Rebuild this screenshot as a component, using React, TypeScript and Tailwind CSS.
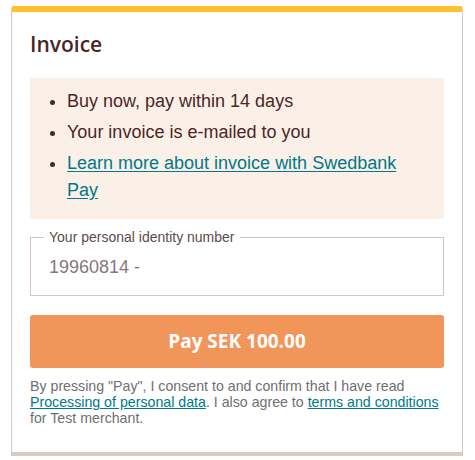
import React from "react";

function App() {
  const body = { fontFamily: '"Liberation Sans", Arial, sans-serif' };
  const head = { fontFamily: '"Open Sans", "Liberation Sans", sans-serif' };

  return (
    <div className="w-[475px] h-[460px] bg-white pt-[6px] px-[11px]" style={body}>
      <div className="w-[452px] border border-[#d6cbc4] border-t-[6px] border-t-[#fcc12b] rounded-t-[3px] shadow-[0_3px_0_#dccbc1] px-[18px] pt-[18px] pb-[26px]">
        <h2 className="text-[21px] leading-[28px] font-semibold text-[#4b2626] mb-[20px]" style={head}>
          Invoice
        </h2>

        <div className="bg-[#fbf0e7] pt-[10px] pb-[15px] pl-[37px] pr-[30px]">
          <ul className="list-disc text-[18px] leading-[27px] text-[#4b2626] flex flex-col gap-[4px] marker:text-[#4b2626]">
            <li>Buy now, pay within 14 days</li>
            <li>Your invoice is e-mailed to you</li>
            <li>
              <a href="#" className="text-[#00798a] underline underline-offset-[2px]">
                Learn more about invoice with Swedbank Pay
              </a>
            </li>
          </ul>
        </div>

        <fieldset className="mt-[10px] border border-[#d6c5bb] h-[67px] pl-[13px] pr-[14px]">
          <legend className="px-[5px] text-[14px] leading-[16px] text-[#5f4a4a]">
            Your personal identity number
          </legend>
          <div className="pl-[5px] pt-[12px] text-[18px] leading-[20px] text-[#85777f]">19960814 -</div>
        </fieldset>

        <button
          type="button"
          className="mt-[19px] w-full h-[53px] rounded-[3px] bg-[#f2955a] text-white text-[19px] font-bold"
          style={head}
        >
          Pay SEK 100.00
        </button>

        <p className="mt-[10px] text-[14.2px] leading-[16px] text-[#6f6f6f]">
          By pressing "Pay", I consent to and confirm that I have read{" "}
          <a href="#" className="text-[#00798a] underline">Processing of personal data</a>. I also agree to{" "}
          <a href="#" className="text-[#00798a] underline">terms and conditions</a> for Test merchant.
        </p>
      </div>
    </div>
  );
}

export default App;
